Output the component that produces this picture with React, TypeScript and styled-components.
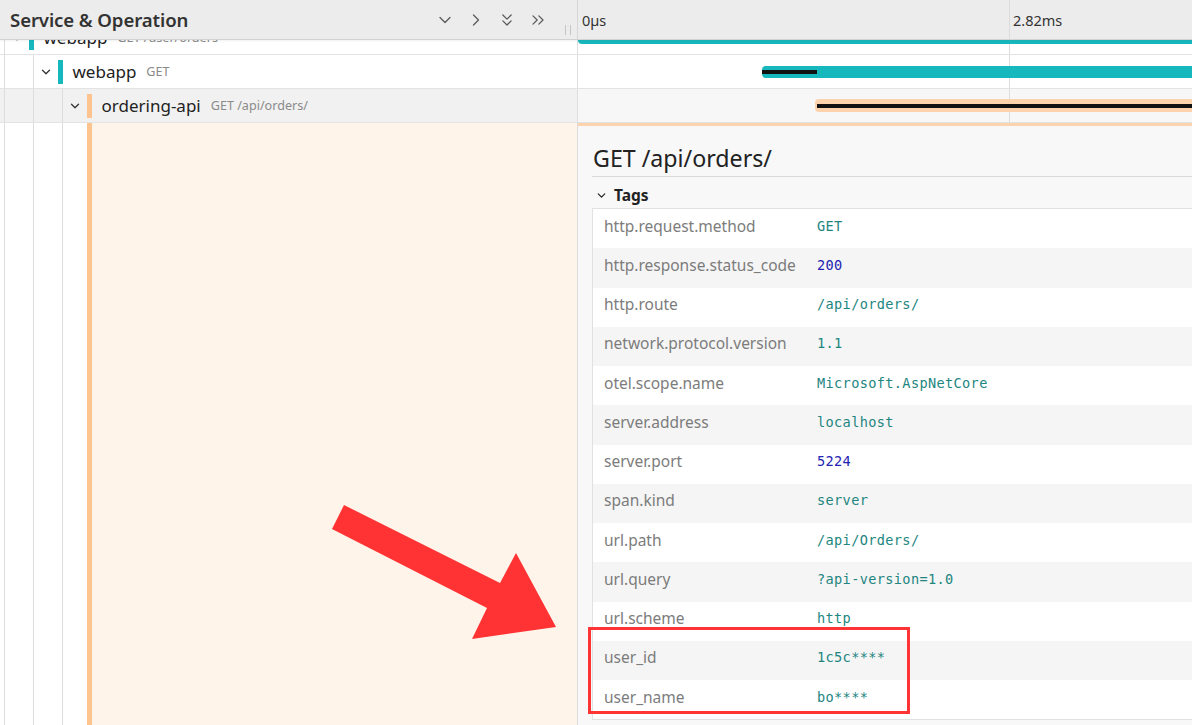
import React, { useLayoutEffect, useRef } from "react";
import styled, { createGlobalStyle } from "styled-components";
import { ChevronDown, ChevronRight, ChevronsDown, ChevronsRight } from "lucide-react";

const LEFT = 578;

const GlobalStyle = createGlobalStyle`
  html, body { margin: 0; padding: 0; background: #ffffff; }
  body { font-family: "Noto Sans", "Open Sans", sans-serif; overflow: hidden; color: #222; }
  #root { width: 1192px; height: 725px; }
`;

const Page = styled.div`
  position: relative;
  width: 1192px;
  height: 725px;
  overflow: hidden;
  display: flex;
  flex-direction: column;
`;

const Header = styled.header`
  flex: none;
  height: 40px;
  box-sizing: border-box;
  display: grid;
  grid-template-columns: ${LEFT}px 1fr;
  background: #ececec;
  border-bottom: 1px solid #d2d2d2;
  box-shadow: 0 1px 2px rgba(0, 0, 0, 0.06);
  position: relative;
  z-index: 2;
`;

const HeaderLeft = styled.div`
  display: flex;
  align-items: center;
  padding: 0 6px 0 10px;
  border-right: 1px solid #d6d6d6;
`;

const HeaderTitle = styled.h1`
  margin: 0;
  flex: 1;
  font-size: 18.6px;
  font-weight: 600;
  color: #333;
  letter-spacing: -0.1px;
`;

const IconGroup = styled.div`
  display: flex;
  gap: 10px;
`;

const IconButton = styled.button`
  width: 21px;
  height: 22px;
  padding: 0;
  border: 0;
  background: none;
  color: #5a5a5a;
  display: grid;
  place-items: center;
`;

const Grip = styled.span`
  align-self: flex-end;
  margin: 0 0 4px 17px;
  width: 4px;
  height: 10px;
  border-left: 1px solid #c6c6c6;
  border-right: 1px solid #c6c6c6;
`;

const TimeCell = styled.div<{ $bg?: string }>`
  position: relative;
  overflow: hidden;
  background: ${(p) => p.$bg || "transparent"};
`;

const TickLabel = styled.span`
  position: absolute;
  top: 0;
  height: 100%;
  display: flex;
  align-items: center;
  padding-left: 4px;
  font-size: 14.5px;
  color: #333;
`;

const GridLine = styled.span`
  position: absolute;
  top: 0;
  bottom: 0;
  width: 1px;
  background: #dcdcdc;
`;

const Body = styled.div`
  flex: 1;
  overflow: hidden;
  display: flex;
  flex-direction: column;
`;

const Row = styled.div`
  flex: none;
  height: 34px;
  box-sizing: border-box;
  display: grid;
  grid-template-columns: ${LEFT}px 1fr;
  border-bottom: 1px solid #e3e3e3;
`;

const TreeCell = styled.div<{ $selected?: boolean }>`
  display: flex;
  align-items: center;
  border-right: 1px solid #dedede;
  background: ${(p) => (p.$selected ? "#f1f1f1" : "#ffffff")};
`;

const Guide = styled.span`
  align-self: stretch;
  flex: none;
  width: 24px;
  margin-left: 4px;
  border-left: 1.5px solid #dddddd;
  display: flex;
  align-items: center;
  justify-content: center;
  color: #333;
`;

const ServiceBar = styled.span<{ $color: string }>`
  flex: none;
  width: 4.5px;
  height: 24px;
  margin-right: 10px;
  background: ${(p) => p.$color};
`;

const ServiceName = styled.span`
  font-size: 17px;
  color: #222;
  white-space: nowrap;
`;

const OpName = styled.span`
  margin-left: 10px;
  font-size: 12.6px;
  color: #8a8a8a;
  white-space: nowrap;
`;

const SpanBar = styled.span<{ $color: string; $top: number; $h: number }>`
  position: absolute;
  top: ${(p) => p.$top}px;
  height: ${(p) => p.$h}px;
  right: -10px;
  border-radius: 4px;
  background: ${(p) => p.$color};
`;

const SelfLine = styled.span<{ $top: number; $h: number; $inset: number }>`
  position: absolute;
  top: ${(p) => p.$top}px;
  height: ${(p) => p.$h}px;
  left: ${(p) => p.$inset}px;
  background: #111;
`;

const DetailRow = styled.div`
  flex: none;
  min-height: 640px;
  display: grid;
  grid-template-columns: ${LEFT}px 1fr;
`;

const DetailTree = styled.div`
  display: flex;
  border-right: 1px solid #dcdcdc;
  background: #ffffff;
`;

const DetailStripe = styled.span<{ $color: string }>`
  flex: none;
  width: 4.5px;
  background: ${(p) => p.$color};
`;

const PeachFill = styled.div`
  flex: 1;
  background: #fef4ea;
`;

const DetailPanel = styled.section`
  border-top: 3px solid #fdd3ad;
  background: #f8f8f8;
  padding: 16px 0 0 14px;
  display: flex;
  flex-direction: column;
`;

const DetailTitle = styled.h2`
  margin: 0;
  padding: 0 0 2px 1px;
  font-size: 23.2px;
  line-height: 32px;
  font-weight: 400;
  color: #222;
  border-bottom: 1px solid #d9d9d9;
`;

const SectionToggle = styled.div`
  display: flex;
  align-items: center;
  gap: 6px;
  height: 31px;
  box-sizing: border-box;
  padding: 5px 0 0 3px;
  font-size: 15.5px;
  font-weight: 700;
  color: #222;
`;

const TagTable = styled.div`
  border: 1px solid #e1e1e1;
  border-right: 0;
  background: #fff;
`;

const TagRow = styled.div<{ $alt: boolean }>`
  display: grid;
  grid-template-columns: 224px 1fr;
  align-items: center;
  height: 39.25px;
  box-sizing: border-box;
  padding-bottom: 6px;
  background: ${(p) => (p.$alt ? "#f5f5f5" : "#ffffff")};
`;

const TagKey = styled.span`
  padding-left: 11px;
  font-size: 15.5px;
  color: #7c7c7c;
  white-space: nowrap;
`;

const TagValue = styled.span<{ $num: boolean }>`
  font-family: "DejaVu Sans Mono", "Liberation Mono", monospace;
  font-size: 13.6px;
  letter-spacing: 0.35px;
  color: ${(p) => (p.$num ? "#2424b2" : "#23857f")};
  white-space: nowrap;
`;

const Highlight = styled.div`
  position: absolute;
  left: 588px;
  top: 627px;
  width: 322px;
  height: 87px;
  box-sizing: border-box;
  border: 3px solid #ff3434;
  pointer-events: none;
`;

const Arrow = styled.svg`
  position: absolute;
  left: 0;
  top: 0;
  width: 1192px;
  height: 725px;
  pointer-events: none;
`;

type SpanRow = {
  depth: number;
  service: string;
  op: string;
  color: string;
  barColor: string;
  start: number;
  selfWidth: number | null;
  selected?: boolean;
};

const spans: SpanRow[] = [
  { depth: 0, service: "webapp", op: "GET /user/orders", color: "#17b8bd", barColor: "#17b8bd", start: 0, selfWidth: null },
  { depth: 1, service: "webapp", op: "GET", color: "#17b8bd", barColor: "#17b8bd", start: 0.2997, selfWidth: 55 },
  { depth: 2, service: "ordering-api", op: "GET /api/orders/", color: "#fdc48f", barColor: "#fdd3ad", start: 0.386, selfWidth: -1, selected: true },
];

const ticks = [
  { label: "0µs", at: 0 },
  { label: "2.82ms", at: 0.702 },
];

const tags: [string, string, boolean][] = [
  ["http.request.method", "GET", false],
  ["http.response.status_code", "200", true],
  ["http.route", "/api/orders/", false],
  ["network.protocol.version", "1.1", false],
  ["otel.scope.name", "Microsoft.AspNetCore", false],
  ["server.address", "localhost", false],
  ["server.port", "5224", true],
  ["span.kind", "server", false],
  ["url.path", "/api/Orders/", false],
  ["url.query", "?api-version=1.0", false],
  ["url.scheme", "http", false],
  ["user_id", "1c5c****", false],
  ["user_name", "bo****", false],
];

const pct = (v: number) => `${(v * 100).toFixed(2)}%`;

function GridLines() {
  return (
    <>
      {ticks
        .filter((t) => t.at > 0)
        .map((t) => (
          <GridLine key={t.label} style={{ left: pct(t.at) }} />
        ))}
    </>
  );
}

function TreeRow({ span }: { span: SpanRow }) {
  const guides = Array.from({ length: span.depth });
  return (
    <TreeCell $selected={span.selected}>
      {guides.map((_, i) => (
        <Guide key={i} />
      ))}
      <Guide>
        <ChevronDown size={14} strokeWidth={2.2} />
      </Guide>
      <ServiceBar $color={span.color} />
      <ServiceName>{span.service}</ServiceName>
      <OpName>{span.op}</OpName>
    </TreeCell>
  );
}

function TimelineRow({ span }: { span: SpanRow }) {
  const isSel = !!span.selected;
  return (
    <TimeCell $bg={isSel ? "#f7f7f7" : "#ffffff"}>
      <GridLines />
      <SpanBar
        $color={span.barColor}
        $top={isSel ? 10 : 11}
        $h={isSel ? 13 : 12}
        style={{ left: pct(span.start) }}
      >
        {span.selfWidth !== null && (
          <SelfLine
            $top={isSel ? 4.5 : 4}
            $h={isSel ? 4 : 3.5}
            $inset={isSel ? 2 : 0}
            style={span.selfWidth > 0 ? { width: span.selfWidth } : { right: 0 }}
          />
        )}
      </SpanBar>
    </TimeCell>
  );
}

export default function App() {
  const bodyRef = useRef<HTMLDivElement>(null);
  useLayoutEffect(() => {
    if (bodyRef.current) bodyRef.current.scrollTop = 19;
  }, []);
  const selected = spans[spans.length - 1];

  return (
    <Page>
      <GlobalStyle />
      <Header>
        <HeaderLeft>
          <HeaderTitle>Service &amp; Operation</HeaderTitle>
          <IconGroup>
            <IconButton aria-label="Collapse one">
              <ChevronDown size={20} strokeWidth={1.5} />
            </IconButton>
            <IconButton aria-label="Expand one">
              <ChevronRight size={20} strokeWidth={1.5} />
            </IconButton>
            <IconButton aria-label="Collapse all">
              <ChevronsDown size={20} strokeWidth={1.5} />
            </IconButton>
            <IconButton aria-label="Expand all">
              <ChevronsRight size={20} strokeWidth={1.5} />
            </IconButton>
          </IconGroup>
          <Grip />
        </HeaderLeft>
        <TimeCell>
          <GridLines />
          {ticks.map((t) => (
            <TickLabel key={t.label} style={{ left: pct(t.at) }}>
              {t.label}
            </TickLabel>
          ))}
        </TimeCell>
      </Header>

      <Body ref={bodyRef}>
        {spans.map((s, i) => (
          <Row key={i}>
            <TreeRow span={s} />
            <TimelineRow span={s} />
          </Row>
        ))}
        <DetailRow>
          <DetailTree>
            {Array.from({ length: selected.depth + 1 }).map((_, i) => (
              <Guide key={i} />
            ))}
            <DetailStripe $color={selected.color} />
            <PeachFill />
          </DetailTree>
          <DetailPanel>
            <DetailTitle>GET /api/orders/</DetailTitle>
            <SectionToggle>
              <ChevronDown size={13} strokeWidth={2.2} />
              Tags
            </SectionToggle>
            <TagTable>
              {tags.map(([k, v, num], i) => (
                <TagRow key={k} $alt={i % 2 === 1}>
                  <TagKey>{k}</TagKey>
                  <TagValue $num={num}>{v}</TagValue>
                </TagRow>
              ))}
            </TagTable>
          </DetailPanel>
        </DetailRow>
      </Body>

      <Highlight />
      <Arrow viewBox="0 0 1192 725">
        <polygon
          points="344,505 500,583 516,553 556,627 472,639 487,608 332,529"
          fill="#ff3333"
        />
      </Arrow>
    </Page>
  );
}
